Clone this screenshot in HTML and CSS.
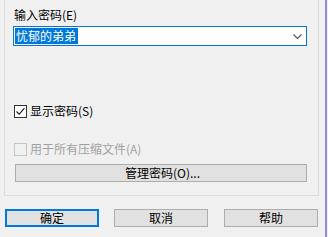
FILE: index.html
```html
<html>
<head>
	<meta charset="utf-8">
	<title>输入密码</title>
	<link rel="stylesheet" href="styles.css">
</head>
<body>

	<div class="frame">

		<div class="group">

			<p class="label">输入密码(E)</p>
			<div class="combo">
				<span class="sel">忧郁的弟弟</span>
				<svg class="arrow" width="9" height="5" viewBox="0 0 9 5"><path d="M0.5 0.5 L4.5 4.5 L8.5 0.5" fill="none" stroke="#555" stroke-width="1.1"/></svg>
			</div>

			<div class="check" id="show">
				<span class="box">
					<svg width="11" height="11" viewBox="0 0 11 11"><path d="M1.5 5.5 L4.2 8.2 L9.5 2.2" fill="none" stroke="#222" stroke-width="1.2"/></svg>
				</span>
				显示密码(S)
			</div>

			<div class="check off" id="all">
				<span class="box"></span>
				用于所有压缩文件(A)
			</div>

			<div class="btn wide">管理密码(O)...</div>

		</div>

		<div class="buttons">
			<div class="btn def">确定</div>
			<div class="btn">取消</div>
			<div class="btn">帮助</div>
		</div>

	</div>

</body>
</html>
```

FILE: styles.css
```css
* {
	margin: 0;
	padding: 0;
	box-sizing: border-box;
}

body {
	font: 12px "Noto Sans CJK SC", "Liberation Sans", sans-serif;
	background: #F0F0F0;
	color: #000;
}

.frame {
	width: 327px;
	height: 237px;
	border-right: 2px solid #9389E2;
	overflow: hidden;
}


.group {
	margin-left: 4px;
	width: 315px;
	height: 196px;
	border: 1px solid #DCDCDC;
	border-top: none;
	padding: 8px 0 0 8px;
}

.label {
	line-height: 14px;
	margin: 0 0 4px 1px;
}

.combo {
	width: 294px;
	height: 20px;
	border: 1px solid #0078D7;
	background: #FFF;
	display: flex;
	align-items: center;
	padding-left: 1px;
}

.sel {
	background: #0078D7;
	color: #FFF;
	line-height: 16px;
	padding: 0 2px 0 1px;
}

.arrow {
	margin-left: auto;
	margin-right: 4px;
}


.check {
	display: flex;
	align-items: center;
	line-height: 16px;
	margin-left: 1px;
}

#show {
	margin-top: 57px;
}

#all {
	margin-top: 22px;
}

.box {
	width: 13px;
	height: 13px;
	border: 1px solid #333;
	background: #FFF;
	margin-right: 3px;
	display: flex;
	align-items: center;
	justify-content: center;
}

.off {
	color: #A0A0A0;
}

.off .box {
	border-color: #C4C4C4;
	background: #F0F0F0;
}


.btn {
	height: 18px;
	width: 94px;
	border: 1px solid #ADADAD;
	background: #E1E1E1;
	text-align: center;
	line-height: 16px;
}

.wide {
	width: 292px;
	margin: 7px 0 0 2px;
	padding-left: 3px;
}

.def {
	border: 2px solid #0078D7;
	line-height: 14px;
}

.buttons {
	display: flex;
	gap: 15px;
	margin: 13px 0 0 5px;
}

.buttons .btn:last-child {
	margin-left: 1px;
}
```
